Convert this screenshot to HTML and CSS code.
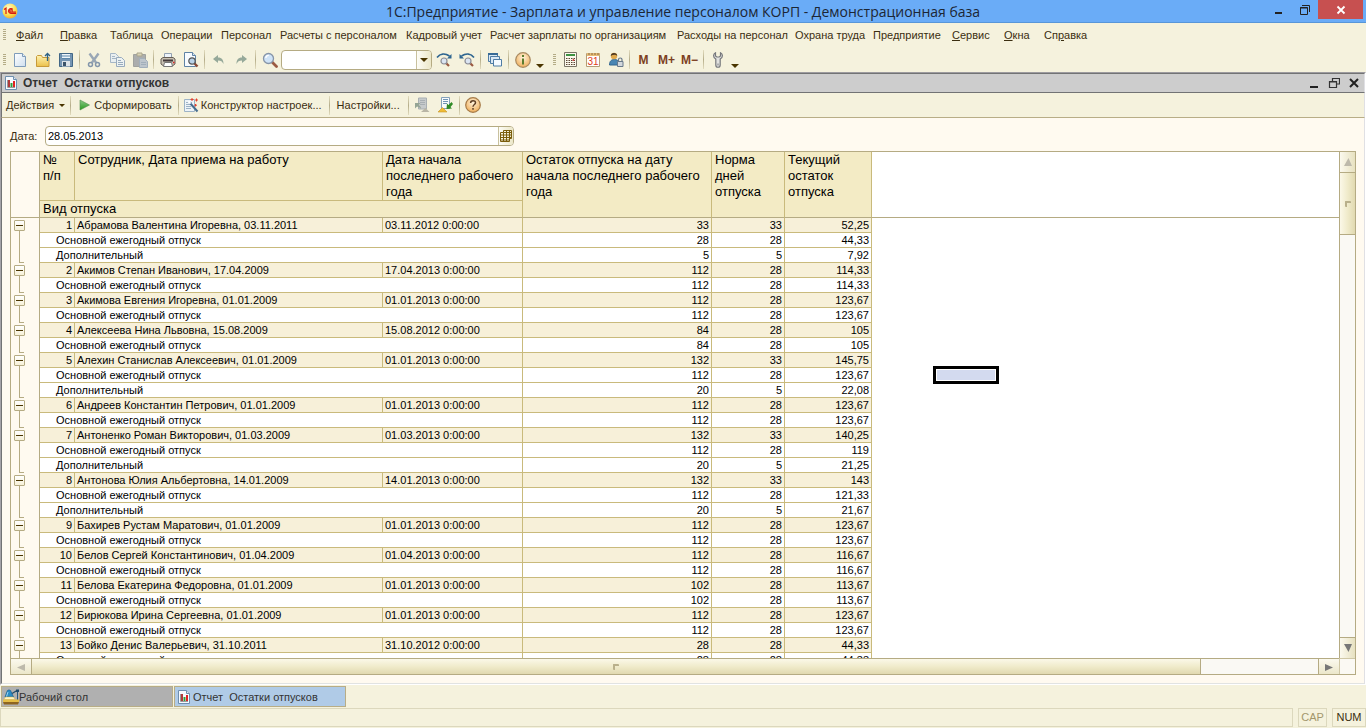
FILE: index.html
```html
<!DOCTYPE html>
<html lang="ru">
<head>
<meta charset="utf-8">
<title>1С:Предприятие - Зарплата и управление персоналом КОРП</title>
<link rel="stylesheet" href="styles.css">
</head>
<body>
<svg class="defs" aria-hidden="true">
  <defs>
    <linearGradient id="gold" x1="0" y1="0" x2="0" y2="1"><stop offset="0" stop-color="#fff3b0"/><stop offset="1" stop-color="#ebc04a"/></linearGradient>
    <linearGradient id="page" x1="0" y1="0" x2="1" y2="1"><stop offset="0" stop-color="#fff"/><stop offset="1" stop-color="#cfdfee"/></linearGradient>
    <radialGradient id="orb" cx="0.5" cy="0.35" r="0.7"><stop offset="0" stop-color="#fff3dc"/><stop offset="1" stop-color="#eea94f"/></radialGradient>
    <radialGradient id="ball" cx="0.4" cy="0.3" r="0.8"><stop offset="0" stop-color="#fffbd0"/><stop offset="0.6" stop-color="#fbdc4d"/><stop offset="1" stop-color="#e79a2c"/></radialGradient>
    <linearGradient id="play" x1="0" y1="0" x2="0" y2="1"><stop offset="0" stop-color="#8ec98a"/><stop offset="1" stop-color="#259a1c"/></linearGradient>
    <symbol id="i-report" viewBox="0 0 16 16"><path d="M2.500 1.500h8l3 3v10h-11z" fill="#f6faff" stroke="#6f8fae"/><path d="M10.500 1.500v3h3" fill="#dbe8f4" stroke="#6f8fae"/><path d="M4.500 5v7.500H12" fill="none" stroke="#999"/><path d="M5 5h2v7H5z" fill="#b03a3a"/><path d="M7.500 8h2v4h-2z" fill="#2f9d3c"/><path d="M10 6h2v6h-2z" fill="#e32222"/></symbol>
    <symbol id="i-lens" viewBox="0 0 16 16"><path d="M10 10l4.500 4.500" stroke="#9b5a42" stroke-width="2.800" stroke-linecap="round"/><circle cx="6.500" cy="6.500" r="5" fill="#cfe3f7" stroke="#8795a8" stroke-width="1.300"/><path d="M3.800 6a3 3 0 0 1 3-2.600" stroke="#fff" stroke-width="1.300" fill="none"/></symbol>
  </defs>
</svg>

<header class="titlebar">
  <svg class="logo" viewBox="0 0 16 16"><circle cx="8" cy="8" r="7.500" fill="url(#ball)"/><path d="M2 6.500l2-1.300V11M10.800 6.400A2.400 2.400 0 1 0 9 10.300h5M10 8.500a1.200 1.200 0 1 0-1 .5h5" fill="none" stroke="#d61a12" stroke-width="1.200"/></svg>
  <h1>1С:Предприятие - Зарплата и управление персоналом КОРП - Демонстрационная база</h1>
  <div class="win-controls">
    <button aria-label="Свернуть"><svg viewBox="0 0 12 12"><path d="M2 9h7" stroke="#222" stroke-width="2"/></svg></button>
    <button aria-label="Развернуть"><svg viewBox="0 0 12 12"><path d="M3 1.500h7.500V8M1.500 3.500h7v7h-7zM1 4h8" fill="none" stroke="#222" stroke-width="1"/></svg></button>
    <button class="close" aria-label="Закрыть"><svg viewBox="0 0 12 12"><path d="M2.500 2.500l7 7M9.500 2.500l-7 7" stroke="#fff" stroke-width="1.800"/></svg></button>
  </div>
</header>

<nav class="menubar">
  <span class="grip"></span>
  <button><u>Ф</u>айл</button><button><u>П</u>равка</button><button>Таблица</button><button>Операции</button><button>Персонал</button><button>Расчеты с персоналом</button><button>Кадровый учет</button><button>Расчет зарплаты по организациям</button><button>Расходы на персонал</button><button>Охрана труда</button><button>Предприятие</button><button><u>С</u>ервис</button><button><u>О</u>кна</button><button>Сп<u>р</u>авка</button>
</nav>

<div class="toolbar">
  <span class="grip"></span>
  <button class="ico" aria-label="Новый"><svg viewBox="0 0 16 16"><path d="M2.500 1.500h8l3 3v10h-11z" fill="url(#page)" stroke="#7f9cba"/><path d="M10.500 1.500v3h3" fill="#e6eff8" stroke="#7f9cba"/></svg></button>
  <button class="ico" aria-label="Открыть"><svg viewBox="0 0 16 16"><path d="M1.500 14.500v-10l1-1h4l1 2h6.500v9z" fill="url(#gold)" stroke="#c79a3a"/><path d="M12.500 9V2M10 4l2.500-2.500L15 4" fill="none" stroke="#2d6285" stroke-width="1.300"/></svg></button>
  <button class="ico" aria-label="Сохранить"><svg viewBox="0 0 16 16"><path d="M1.500 1.500h13v13h-13z" fill="#7595b3" stroke="#426786"/><path d="M4 2h8v5H4z" fill="#eef5fb"/><path d="M3 4h10M4 6.500h8" stroke="#5b87aa"/><path d="M4 9h8v5.500H4z" fill="#dde3e8"/><path d="M5 10h3v4H5z" fill="#3c546a"/></svg></button>
  <span class="sep"></span>
  <button class="ico" aria-label="Вырезать" disabled><svg viewBox="0 0 16 16"><path d="M3.500 1.500l6.500 9M12.500 1.500l-6.500 9" stroke="#99a7b5" stroke-width="2.400"/><circle cx="4.500" cy="12.500" r="2" fill="none" stroke="#8496aa" stroke-width="1.500"/><circle cx="11.500" cy="12.500" r="2" fill="none" stroke="#8496aa" stroke-width="1.500"/></svg></button>
  <button class="ico" aria-label="Копировать" disabled><svg viewBox="0 0 16 16"><path d="M1.500 1.500h5l3 3v6h-8z" fill="#e9eff0" stroke="#a5b6c6"/><path d="M3 4.500h3M3 6.500h4" stroke="#a5b6c6"/><path d="M7.500 5.500h5l3 3v6h-8z" fill="#edf2f2" stroke="#98abbd"/><path d="M9 8.500h3M9 10.500h5M9 12.500h5" stroke="#98abbd"/></svg></button>
  <button class="ico" aria-label="Вставить" disabled><svg viewBox="0 0 16 16"><path d="M1.500 2.500h12v12h-12z" fill="#abadad" stroke="#a0a29e"/><path d="M5 1h5v3H5z" fill="#d9d4b8" stroke="#aaa58c"/><path d="M7.500 6.500h5l3 3v6h-8z" fill="#bdc5cc" stroke="#a2afbb"/><path d="M9 10.500h5M9 12.500h5" stroke="#a2afbb"/></svg></button>
  <span class="sep"></span>
  <button class="ico" aria-label="Печать"><svg viewBox="0 0 16 16"><path d="M4.500 6v-4.500h7v5" fill="#edf3fa" stroke="#92a1b1"/><path d="M1 7l2-1.500h10L15 7v5l-2 1.500H3L1 12z" fill="#c8c1b3" stroke="#665e55"/><path d="M3 8.500h10" stroke="#43393a" stroke-width="2"/><path d="M4.500 10.500h7l1 4h-9z" fill="#fff" stroke="#777"/><path d="M13 10.500h1.500" stroke="#e02525" stroke-width="1.500"/></svg></button>
  <button class="ico" aria-label="Предварительный просмотр"><svg viewBox="0 0 16 16"><path d="M1.500 .5h8l3 3v11h-11z" fill="#f7fbff" stroke="#5f83a5"/><path d="M9.500 .5v3h3" fill="#dce8f3" stroke="#5f83a5"/><path d="M11 11l3.500 3.500" stroke="#8b4a36" stroke-width="2.400"/><circle cx="9" cy="9" r="3.200" fill="#b9d2e8" stroke="#555" stroke-width="1.200"/></svg></button>
  <span class="sep"></span>
  <button class="ico" aria-label="Отменить" disabled><svg viewBox="0 0 16 16"><path d="M2 7l5-4v2.500c4 0 5.500 2.500 5.500 6.500-1.200-2.500-2.500-3.500-5.500-3.500V11z" fill="#96a99a"/></svg></button>
  <button class="ico" aria-label="Вернуть" disabled><svg viewBox="0 0 16 16"><path d="M13 7L8 3v2.500c-4 0-5.500 2.500-5.500 6.500 1.200-2.500 2.500-3.500 5.500-3.500V11z" fill="#96a99a"/></svg></button>
  <span class="sep"></span>
  <button class="ico" aria-label="Найти"><svg viewBox="0 0 16 16"><use href="#i-lens"/></svg></button>
  <div class="field search"><input type="text" aria-label="Строка поиска"><button aria-label="История поиска"><span class="caret"></span></button></div>
  <button class="ico" aria-label="Найти следующий"><svg viewBox="0 0 16 16"><path d="M1 5.500C4 1.500 9 1 13.500 4" fill="none" stroke="#2e6590" stroke-width="1.600"/><path d="M11 6.500h4.500V2z" fill="#2e6590"/><path d="M10 11l3 3" stroke="#9b5a42" stroke-width="2.200"/><circle cx="8" cy="9" r="3" fill="#dbe5f2" stroke="#8c8d96" stroke-width="1.200"/></svg></button>
  <button class="ico" aria-label="Найти предыдущий"><svg viewBox="0 0 16 16"><path d="M15 5.500C12 1.500 7 1 2.500 4" fill="none" stroke="#2e6590" stroke-width="1.600"/><path d="M5 6.500H.5V2z" fill="#2e6590"/><path d="M11 11l3 3" stroke="#9b5a42" stroke-width="2.200"/><circle cx="9" cy="9" r="3" fill="#dbe5f2" stroke="#8c8d96" stroke-width="1.200"/></svg></button>
  <span class="sep"></span>
  <button class="ico" aria-label="Окна"><svg viewBox="0 0 16 16"><path d="M1.500 1.500h9v8h-9z" fill="#dae8f4" stroke="#4f7ca4"/><path d="M1 2h10" stroke="#376a96" stroke-width="2"/><path d="M3.500 4.500h9v7h-9z" fill="#dae8f4" stroke="#4f7ca4"/><path d="M6.500 7.500h8v6.500h-8z" fill="#f5faff" stroke="#4f7ca4"/></svg></button>
  <span class="sep"></span>
  <button class="ico" aria-label="Информация"><svg viewBox="0 0 16 16"><circle cx="8" cy="8" r="7.300" fill="url(#orb)" stroke="#a98b62" stroke-width="1.200"/><path d="M8 3v2M8 6.500v6" stroke="#5b7d2e" stroke-width="2"/></svg></button>
  <button class="drop" aria-label="Ещё"><span class="caret"></span></button>
  <span class="grip inner"></span>
  <button class="ico" aria-label="Калькулятор"><svg viewBox="0 0 16 16"><path d="M2.500 .5h12v14h-12z" fill="#fbf8ec" stroke="#7a7466"/><path d="M4 3h9" stroke="#3d9243" stroke-width="2"/><path d="M4 6.500h9M4 8.500h9M4 10.500h9M4 12.500h9" stroke="#5b4634" stroke-dasharray="1.500 1"/><path d="M11.500 7v2" stroke="#d44" stroke-width="1.500"/></svg></button>
  <button class="ico" aria-label="Календарь"><svg viewBox="0 0 16 16"><path d="M1.500 1.500h13v13h-13z" fill="#fff" stroke="#b69c74"/><path d="M2 2.500h12.500" stroke="#e6bb75" stroke-width="3"/><path d="M4 1v2M7 1v2M10 1v2M13 1v2" stroke="#876a47"/><text x="8" y="13" text-anchor="middle" class="cal">31</text></svg></button>
  <button class="ico" aria-label="Права пользователя"><svg viewBox="0 0 16 16"><path d="M1.500 13c0-4 2-5.500 5-5.500s4.500 1.500 5 5.500z" fill="#4a86b3" stroke="#336690"/><circle cx="6" cy="4" r="3.200" fill="#e0a94d"/><path d="M2.800 4C2.500 0 9.500 0 9.200 4 8 2.500 5 2.300 2.800 4z" fill="#493520"/><path d="M9.500 9.500h5.500v5H9.500z" fill="#d2d8dd" stroke="#68798a"/><path d="M10.500 9V7.500c0-2 3.500-2 3.500 0V9" fill="none" stroke="#68798a" stroke-width="1.200"/></svg></button>
  <span class="sep"></span>
  <button class="ico mem">M</button><button class="ico mem">M+</button><button class="ico mem">M−</button>
  <span class="sep"></span>
  <button class="ico" aria-label="Настройка"><svg viewBox="0 0 16 16"><path d="M5.500 .8C3 2 2.800 5.500 5.800 7v6c0 3 4.400 3 4.400 0V7c3-1.500 2.800-5 .3-6.200V4l-1.300 1H6.800L5.500 4z" fill="#e2e2e0" stroke="#76787c" stroke-width="1.200"/><path d="M8 11.500v2" stroke="#76787c"/></svg></button>
  <button class="drop" aria-label="Ещё"><span class="caret"></span></button>
</div>

<main class="window">
  <div class="window-title">
    <svg class="i16" viewBox="0 0 16 16"><use href="#i-report"/></svg>
    <h2>Отчет&nbsp; Остатки отпусков</h2>
    <div class="mdi">
      <button aria-label="Свернуть окно"><svg viewBox="0 0 12 12"><path d="M2 10h8" stroke="#222" stroke-width="2"/></svg></button>
      <button aria-label="Восстановить окно"><svg viewBox="0 0 12 12"><path d="M4.500 4V1.500h7V7H9M1.500 4.500h7v6h-7zM1 5h8" fill="none" stroke="#333" stroke-width="1.200"/></svg></button>
      <button aria-label="Закрыть окно"><svg viewBox="0 0 12 12"><path d="M2 2l8 8M10 2l-8 8" stroke="#222" stroke-width="2"/></svg></button>
    </div>
  </div>

  <div class="actions">
    <button class="act menu">Действия<span class="caret"></span></button>
    <span class="sep"></span>
    <button class="act run"><svg class="i12" viewBox="0 0 12 12"><path d="M1 1l9.500 5L1 11z" fill="url(#play)" stroke="#4f8f49" stroke-width=".6"/></svg>Сформировать</button>
    <span class="sep"></span>
    <button class="act wizard"><svg class="i16" viewBox="0 0 16 16"><path d="M1.500 2.500h10v12h-10z" fill="#eef4f8" stroke="#9db3c6"/><path d="M3 5.500h6M3 7.500h6M3 9.500h5M3 11.500h5" stroke="#9db3c6"/><path d="M6.500 5.500l8 9" stroke="#466d8e" stroke-width="2"/><path d="M5.500 4.500l2 2.200" stroke="#fff" stroke-width="2"/><path d="M9 1v3M7.500 2.500h3M13.500 1.500v3M12 3h3M12.500 7v2.500M11.500 8.200h2.500" stroke="#e5422f"/></svg>Конструктор настроек...</button>
    <span class="sep"></span>
    <button class="act settings">Настройки...</button>
    <span class="sep"></span>
    <button class="ico" aria-label="Загрузить настройки" disabled><svg viewBox="0 0 16 16"><path d="M4.500 1h8v11h-8z" fill="#c6cacb" stroke="#a8afb3"/><path d="M6 3.500h5M6 5.500h5M6 7.500h5" stroke="#a8afb3"/><path d="M1 6h5.500L4.500 8c2 1 2.500 2 2.500 4-1-1.500-2-2-4-2.500L1 11.500z" fill="#95a595"/><path d="M7 15l4.500-4 4 4z" fill="#b9b5a5"/></svg></button>
    <button class="ico" aria-label="Сохранить настройки"><svg viewBox="0 0 16 16"><path d="M4.500 .5h8v11h-8z" fill="#f8fbfd" stroke="#85a1ba"/><path d="M6 2.500h5M6 4.500h5M6 6.500h4" stroke="#7095b5"/><path d="M14.500 5l-3 3L10 6.500 9.500 12l5.500-.5-1.500-1.500L16 7z" fill="#2f8a25"/><path d="M1 15l4.500-4.500 4.500 4.500z" fill="#f0bc35" stroke="#c69528" stroke-width=".6"/></svg></button>
    <span class="sep"></span>
    <button class="ico" aria-label="Справка"><svg viewBox="0 0 16 16"><circle cx="8" cy="8" r="7.300" fill="url(#orb)" stroke="#a67b49" stroke-width="1.200"/><path d="M5.600 6c0-3.200 5-3 4.900-.2C10.500 7.500 8 7.600 8 9.800M8 11v1.700" fill="none" stroke="#5f4026" stroke-width="1.500"/></svg></button>
  </div>

  <div class="content">
    <div class="date-row">
      <label for="date">Дата:</label>
      <div class="field date"><input id="date" type="text" value="28.05.2013"><button aria-label="Выбрать дату"><svg viewBox="0 0 12 12"><path d="M3.500 .5h8v8h-2v3h-9v-9h3zM1 5h10M1 7.500h10M1 10h8M3.500 3v8M6.500 1v10M9.500 1v8M3.500 2.500h8" fill="none" stroke="#7a5c0a"/></svg></button></div>
    </div>

    <div class="pane">
      <div class="sheet">
        <table>
          <colgroup><col class="c-tree"><col class="c-num"><col class="c-name"><col class="c-date"><col class="c-rest"><col class="c-norm"><col class="c-cur"><col></colgroup>
          <thead>
            <tr class="h1"><th class="tree" rowspan="2"></th><th>№ п/п</th><th>Сотрудник, Дата приема на работу</th><th>Дата начала последнего рабочего года</th><th rowspan="2">Остаток отпуска на дату начала последнего рабочего года</th><th rowspan="2">Норма дней отпуска</th><th rowspan="2">Текущий остаток отпуска</th><th class="rest" rowspan="2"></th></tr>
            <tr class="h2"><th colspan="3">Вид отпуска</th></tr>
          </thead>
          <tbody>
            <tr class="p"><td class="tree"><button aria-label="Свернуть группу"></button></td><td>1</td><td>Абрамова Валентина Игоревна, 03.11.2011</td><td>03.11.2012 0:00:00</td><td>33</td><td>33</td><td>52,25</td></tr>
            <tr class="c"><td class="tree"><i></i></td><td colspan="3">Основной ежегодный отпуск</td><td>28</td><td>28</td><td>44,33</td></tr>
            <tr class="c end"><td class="tree"><i></i></td><td colspan="3">Дополнительный</td><td>5</td><td>5</td><td>7,92</td></tr>
            <tr class="p"><td class="tree"><button aria-label="Свернуть группу"></button></td><td>2</td><td>Акимов Степан Иванович, 17.04.2009</td><td>17.04.2013 0:00:00</td><td>112</td><td>28</td><td>114,33</td></tr>
            <tr class="c end"><td class="tree"><i></i></td><td colspan="3">Основной ежегодный отпуск</td><td>112</td><td>28</td><td>114,33</td></tr>
            <tr class="p"><td class="tree"><button aria-label="Свернуть группу"></button></td><td>3</td><td>Акимова Евгения Игоревна, 01.01.2009</td><td>01.01.2013 0:00:00</td><td>112</td><td>28</td><td>123,67</td></tr>
            <tr class="c end"><td class="tree"><i></i></td><td colspan="3">Основной ежегодный отпуск</td><td>112</td><td>28</td><td>123,67</td></tr>
            <tr class="p"><td class="tree"><button aria-label="Свернуть группу"></button></td><td>4</td><td>Алексеева Нина Львовна, 15.08.2009</td><td>15.08.2012 0:00:00</td><td>84</td><td>28</td><td>105</td></tr>
            <tr class="c end"><td class="tree"><i></i></td><td colspan="3">Основной ежегодный отпуск</td><td>84</td><td>28</td><td>105</td></tr>
            <tr class="p"><td class="tree"><button aria-label="Свернуть группу"></button></td><td>5</td><td>Алехин Станислав Алексеевич, 01.01.2009</td><td>01.01.2013 0:00:00</td><td>132</td><td>33</td><td>145,75</td></tr>
            <tr class="c"><td class="tree"><i></i></td><td colspan="3">Основной ежегодный отпуск</td><td>112</td><td>28</td><td>123,67</td></tr>
            <tr class="c end"><td class="tree"><i></i></td><td colspan="3">Дополнительный</td><td>20</td><td>5</td><td>22,08</td></tr>
            <tr class="p"><td class="tree"><button aria-label="Свернуть группу"></button></td><td>6</td><td>Андреев Константин Петрович, 01.01.2009</td><td>01.01.2013 0:00:00</td><td>112</td><td>28</td><td>123,67</td></tr>
            <tr class="c end"><td class="tree"><i></i></td><td colspan="3">Основной ежегодный отпуск</td><td>112</td><td>28</td><td>123,67</td></tr>
            <tr class="p"><td class="tree"><button aria-label="Свернуть группу"></button></td><td>7</td><td>Антоненко Роман Викторович, 01.03.2009</td><td>01.03.2013 0:00:00</td><td>132</td><td>33</td><td>140,25</td></tr>
            <tr class="c"><td class="tree"><i></i></td><td colspan="3">Основной ежегодный отпуск</td><td>112</td><td>28</td><td>119</td></tr>
            <tr class="c end"><td class="tree"><i></i></td><td colspan="3">Дополнительный</td><td>20</td><td>5</td><td>21,25</td></tr>
            <tr class="p"><td class="tree"><button aria-label="Свернуть группу"></button></td><td>8</td><td>Антонова Юлия Альбертовна, 14.01.2009</td><td>14.01.2013 0:00:00</td><td>132</td><td>33</td><td>143</td></tr>
            <tr class="c"><td class="tree"><i></i></td><td colspan="3">Основной ежегодный отпуск</td><td>112</td><td>28</td><td>121,33</td></tr>
            <tr class="c end"><td class="tree"><i></i></td><td colspan="3">Дополнительный</td><td>20</td><td>5</td><td>21,67</td></tr>
            <tr class="p"><td class="tree"><button aria-label="Свернуть группу"></button></td><td>9</td><td>Бахирев Рустам Маратович, 01.01.2009</td><td>01.01.2013 0:00:00</td><td>112</td><td>28</td><td>123,67</td></tr>
            <tr class="c end"><td class="tree"><i></i></td><td colspan="3">Основной ежегодный отпуск</td><td>112</td><td>28</td><td>123,67</td></tr>
            <tr class="p"><td class="tree"><button aria-label="Свернуть группу"></button></td><td>10</td><td>Белов Сергей Константинович, 01.04.2009</td><td>01.04.2013 0:00:00</td><td>112</td><td>28</td><td>116,67</td></tr>
            <tr class="c end"><td class="tree"><i></i></td><td colspan="3">Основной ежегодный отпуск</td><td>112</td><td>28</td><td>116,67</td></tr>
            <tr class="p"><td class="tree"><button aria-label="Свернуть группу"></button></td><td>11</td><td>Белова Екатерина Федоровна, 01.01.2009</td><td>01.01.2013 0:00:00</td><td>102</td><td>28</td><td>113,67</td></tr>
            <tr class="c end"><td class="tree"><i></i></td><td colspan="3">Основной ежегодный отпуск</td><td>102</td><td>28</td><td>113,67</td></tr>
            <tr class="p"><td class="tree"><button aria-label="Свернуть группу"></button></td><td>12</td><td>Бирюкова Ирина Сергеевна, 01.01.2009</td><td>01.01.2013 0:00:00</td><td>112</td><td>28</td><td>123,67</td></tr>
            <tr class="c end"><td class="tree"><i></i></td><td colspan="3">Основной ежегодный отпуск</td><td>112</td><td>28</td><td>123,67</td></tr>
            <tr class="p"><td class="tree"><button aria-label="Свернуть группу"></button></td><td>13</td><td>Бойко Денис Валерьевич, 31.10.2011</td><td>31.10.2012 0:00:00</td><td>28</td><td>28</td><td>44,33</td></tr>
            <tr class="c end"><td class="tree"><i></i></td><td colspan="3">Основной ежегодный отпуск</td><td>28</td><td>28</td><td>44,33</td></tr>
          </tbody>
        </table>
        <div class="cursor"></div>
      </div>
      <div class="vscroll">
        <button class="off" aria-label="Вверх"><svg viewBox="0 0 8 8"><path d="M0 8h8L4.500 0z" fill="#bdb9ab"/></svg></button>
        <div class="thumb"></div>
        <div class="track"></div>
        <button aria-label="Вниз"><svg viewBox="0 0 8 8"><path d="M0 0h8L4.500 8z" fill="#777"/></svg></button>
      </div>
      <div class="hscroll">
        <button class="off" aria-label="Влево"><svg viewBox="0 0 8 8"><path d="M8 1v7L0 4.500z" fill="#bdb9ab"/></svg></button>
        <div class="thumb"></div>
        <div class="track"></div>
        <button aria-label="Вправо"><svg viewBox="0 0 8 8"><path d="M0 1v7l8-3.500z" fill="#777"/></svg></button>
      </div>
      <div class="corner"></div>
    </div>
  </div>
</main>

<div class="taskbar">
  <button class="task"><svg class="i16" viewBox="0 0 16 16"><path d="M4 2.500c0-2 4-2 4 0l2.500 5.500H2z" fill="#2a8bc4" stroke="#1a5f91" stroke-width=".7"/><path d="M5 3l-1.500 4.500" stroke="#9ad4f2"/><path d="M9 4.500l5-3" stroke="#1f4a6b" stroke-width="1.200"/><path d="M13 .5h3v2.500h-3z" fill="#1f4a6b"/><path d="M14.500 3v8" stroke="#275578"/><path d="M2.500 8h8l1.500 2.500H1z" fill="#fff3c2" stroke="#d8b85a" stroke-width=".5"/><path d="M0 10.500h16v2.500H0z" fill="#e4bd45"/><path d="M0 13h16l-1 2.500H1z" fill="#8d6420"/></svg>Рабочий стол</button>
  <button class="task current"><svg class="i16" viewBox="0 0 16 16"><use href="#i-report"/></svg>Отчет&nbsp; Остатки отпусков</button>
</div>
<footer class="statusbar"><span class="msg"></span><span class="cap">CAP</span><span class="num">NUM</span></footer>
</body>
</html>
```
FILE: styles.css
```css
* { box-sizing: border-box; }

body {
  margin: 0;
  height: 100vh;
  display: flex;
  flex-direction: column;
  overflow: hidden;
  background: #f5f2dd;
  color: #3b2e10;
  font: 11px/14px "Liberation Sans", Arial, sans-serif;
}

button, input { font: inherit; color: inherit; padding: 0; margin: 0; border: 0; background: none; }
svg { display: block; }
.defs { position: absolute; width: 0; height: 0; }
.i16 { width: 16px; height: 16px; flex: none; }
.i12 { width: 12px; height: 12px; flex: none; }

/* Application title */
.titlebar {
  flex: none;
  height: 23px;
  display: grid;
  grid-template-columns: 105px 1fr 105px;
  background: #6aacf7;
  border-bottom: 1px solid #5896d8;
}
.logo { width: 16px; height: 16px; margin: 3px 2px; }
.titlebar h1 {
  margin: 0;
  font: 400 14px/23px "Open Sans", "Noto Sans", sans-serif;
  color: #1c2634;
  text-align: center;
  white-space: nowrap;
}
.win-controls { display: flex; justify-content: flex-end; height: 19px; }
.win-controls button { width: 26px; display: flex; justify-content: center; align-items: center; }
.win-controls svg, .mdi svg { width: 12px; height: 12px; }
.win-controls .close { width: 45px; margin-right: 3px; background: #c75050; }

/* Menu */
.menubar {
  flex: none;
  height: 24px;
  display: grid;
  grid-template-columns: 16px 44px 50px 51px 60px 59px 126px 84px 187px 118px 78px 79px 52px 40px auto;
  align-items: center;
  justify-content: start;
}
.menubar button { text-align: left; white-space: nowrap; }
.grip {
  width: 3px;
  height: 12px;
  margin-left: 3px;
  background: repeating-linear-gradient(#b3ab86 0 1px, transparent 1px 2px);
}

/* Toolbars */
.toolbar { flex: none; height: 25px; display: flex; align-items: center; }
.toolbar > .grip { margin-right: 2px; }
.toolbar > .grip.inner { margin: 0 2px 0 7px; }
.ico { width: 23px; height: 23px; flex: none; display: flex; align-items: center; justify-content: center; }
.ico svg { width: 16px; height: 16px; }
.sep { flex: none; width: 1px; height: 19px; margin: 0 2px; background: linear-gradient(#e2dcbe, #b5ad8a 50%, #e2dcbe); }
.drop { width: 12px; height: 23px; display: flex; align-items: flex-end; justify-content: center; padding-bottom: 3px; }
.caret { border: 4px solid transparent; border-top-color: #4a3500; border-bottom: 0; }
.mem { color: #7c3f22; font-weight: 700; font-size: 12px; }
.cal { font: 400 10px "Liberation Sans", Arial, sans-serif; fill: #e03a1c; }

.field {
  display: flex;
  height: 20px;
  background: #fff;
  border: 1px solid #b5ab83;
  border-radius: 4px;
  overflow: hidden;
}
.field input { flex: 1; min-width: 0; outline: 0; padding: 0 2px; color: #000; }
.field button {
  width: 15px;
  flex: none;
  display: flex;
  align-items: center;
  justify-content: center;
  border-left: 1px solid #c9c19e;
  background: linear-gradient(90deg, #fdfcf6, #ece7c8);
}
.field svg { width: 12px; height: 12px; }
.search { width: 151px; }
.date { width: 469px; }

/* Document window */
.window {
  flex: 1;
  min-height: 0;
  display: flex;
  flex-direction: column;
  background: #fffaf0;
  border: 1px solid;
  border-color: #9d9b9f #fff #fff #a5a3a8;
}
.window-title {
  flex: none;
  height: 20px;
  display: flex;
  align-items: center;
  padding-left: 1px;
  background: #cdcdcd;
  border: 1px solid #727374;
  border-right-color: #e0e0e4;
}
.window-title h2 { margin: 0 0 0 4px; font-size: 12px; font-weight: 700; color: #333; flex: 1; }
.mdi { display: flex; gap: 8px; margin-right: 4px; }
.actions {
  flex: none;
  height: 25px;
  display: flex;
  align-items: center;
  padding-left: 4px;
  background: #f5f2dd;
  border-left: 1px solid #727374;
  border-right: 1px solid #e0e0e4;
  border-bottom: 1px solid #b8ad86;
}
.act { display: flex; align-items: center; white-space: nowrap; }
.act .caret { border-width: 3px; border-bottom: 0; margin: 0 3px 0 5px; }
.run { gap: 3px; padding: 0 4px 0 6px; }
.wizard { gap: 2px; padding: 0 5px 0 2px; }
.settings { padding: 0 6px 0 5px; }

.content {
  flex: 1;
  min-height: 0;
  display: flex;
  flex-direction: column;
  gap: 5px;
  padding: 8px;
  border-left: 1px solid #727374;
  border-right: 1px solid #e0e0e4;
  border-bottom: 1px solid #e1e3e2;
}
.date-row { display: flex; align-items: center; }
.date-row label { width: 35px; }

.pane {
  flex: 1;
  min-height: 0;
  display: grid;
  grid-template-columns: 1fr 16px;
  grid-template-rows: 1fr 16px;
  border: 1px solid #b5ab83;
}
.sheet { position: relative; overflow: hidden; background: #fff; min-height: 0; }

table { width: 100%; table-layout: fixed; border-collapse: separate; border-spacing: 0; color: #000; }
.c-tree { width: 29px; }
.c-num { width: 35px; }
.c-name { width: 308px; }
.c-date { width: 140px; }
.c-rest { width: 189px; }
.c-norm { width: 73px; }
.c-cur { width: 87px; }

th {
  padding: 0 3px;
  font-size: 13px;
  line-height: 16px;
  font-weight: 400;
  text-align: left;
  vertical-align: top;
  background: #f3ebc5;
  border: solid #c9ba7c;
  border-width: 0 1px 1px 0;
}
.h1 { height: 49px; }
.h2 { height: 17px; }
th[rowspan], .h2 th { border-bottom-color: #b5ab83; }
th.rest { background: #fff; border-right: 0; }

td {
  height: 15px;
  padding: 0 2px;
  line-height: 14px;
  white-space: nowrap;
  overflow: hidden;
  text-align: right;
  border: solid #c9ba7c;
  border-width: 0 1px 1px 0;
}
.p td { background: #f7f0d9; }
.p td:nth-child(3), .p td:nth-child(4) { text-align: left; }
.c td:nth-child(2) { text-align: left; padding-left: 16px; }
.p td.tree, .c td.tree, th.tree { background: #fffaf0; border-right-color: #b5ab83; }
td.tree { padding: 0 0 0 3px; border-bottom: 0; vertical-align: top; line-height: 0; }
td.tree button {
  display: block;
  width: 11px;
  height: 11px;
  margin-top: 2px;
  border: 1px solid #b5ab83;
  border-radius: 1px;
  background: linear-gradient(#fff, #f7f1d8);
}
td.tree button::before { content: ""; display: block; width: 7px; height: 1px; margin: 0 auto; background: #4a3500; }
.p td.tree { background: linear-gradient(#b5ab83, #b5ab83) 8px 12px / 1px 3px no-repeat #fffaf0; }
td.tree i { display: block; width: 5px; height: 15px; margin-left: 5px; border-left: 1px solid #b5ab83; }
.end td.tree i { border-bottom: 1px solid #b5ab83; }

/* Selected cell on the free part of the sheet */
.cursor {
  position: absolute;
  left: 922px;
  top: 214px;
  width: 66px;
  height: 18px;
  border: 3px solid #000;
  background: #d3daef;
  box-shadow: inset 0 0 0 1px #fff;
}

/* Scroll bars */
.vscroll { display: flex; flex-direction: column; border-left: 1px solid #b5ab83; min-height: 0; }
.vscroll button, .hscroll button { flex: none; display: flex; align-items: center; justify-content: center; }
.vscroll button { height: 20px; background: linear-gradient(90deg, #fbf9ee, #e7e1c0); }
.vscroll svg, .hscroll svg { width: 8px; height: 8px; }
.vscroll .thumb {
  flex: 0 0 63px;
  border: solid #b5ab83;
  border-width: 1px 0;
  background: linear-gradient(90deg, #fbf8e8, #f0ebcb 50%, #e1d9b0);
}
.track { flex: 1; background: #faf9f4; }
.vscroll button:last-child { height: 21px; border-top: 1px solid #b5ab83; }
.hscroll { display: flex; border-top: 1px solid #b5ab83; }
.hscroll button { width: 20px; background: linear-gradient(#fbf9ee, #ece7ca); }
.hscroll .thumb {
  flex: 10;
  border: solid #b5ab83;
  border-width: 0 1px;
  background: linear-gradient(#fbf8e8, #f0ebcb 50%, #e1d9b0);
}
.thumb { display: flex; align-items: center; justify-content: center; }
.thumb::after { content: ""; width: 4px; height: 4px; border: 1px solid #b9b08b; border-width: 2px 0 0 2px; border-radius: 1px; }
.hscroll button:last-child { width: 21px; border-left: 1px solid #b5ab83; }
.corner { background: #fbf9f3; border: solid #cfc7a5; border-width: 1px 0 0 1px; }

/* Window list and status */
.taskbar { flex: none; display: flex; gap: 1px; padding: 1px 1px 0; }
.task {
  width: 172px;
  height: 21px;
  display: flex;
  align-items: center;
  padding-left: 1px;
  white-space: nowrap;
  background: #b0b0b0;
  border: 1px solid #b8ad86;
  color: #333;
}
.task.current { background: #b0cbe7; gap: 1px; }
.statusbar { flex: none; height: 21px; display: flex; gap: 5px; padding: 1px 0; }
.statusbar span { border: 1px solid #dcd8bd; line-height: 17px; text-align: center; }
.statusbar .msg { flex: 1; }
.statusbar .cap { width: 29px; color: #a3976c; }
.statusbar .num { width: 34px; }
```
